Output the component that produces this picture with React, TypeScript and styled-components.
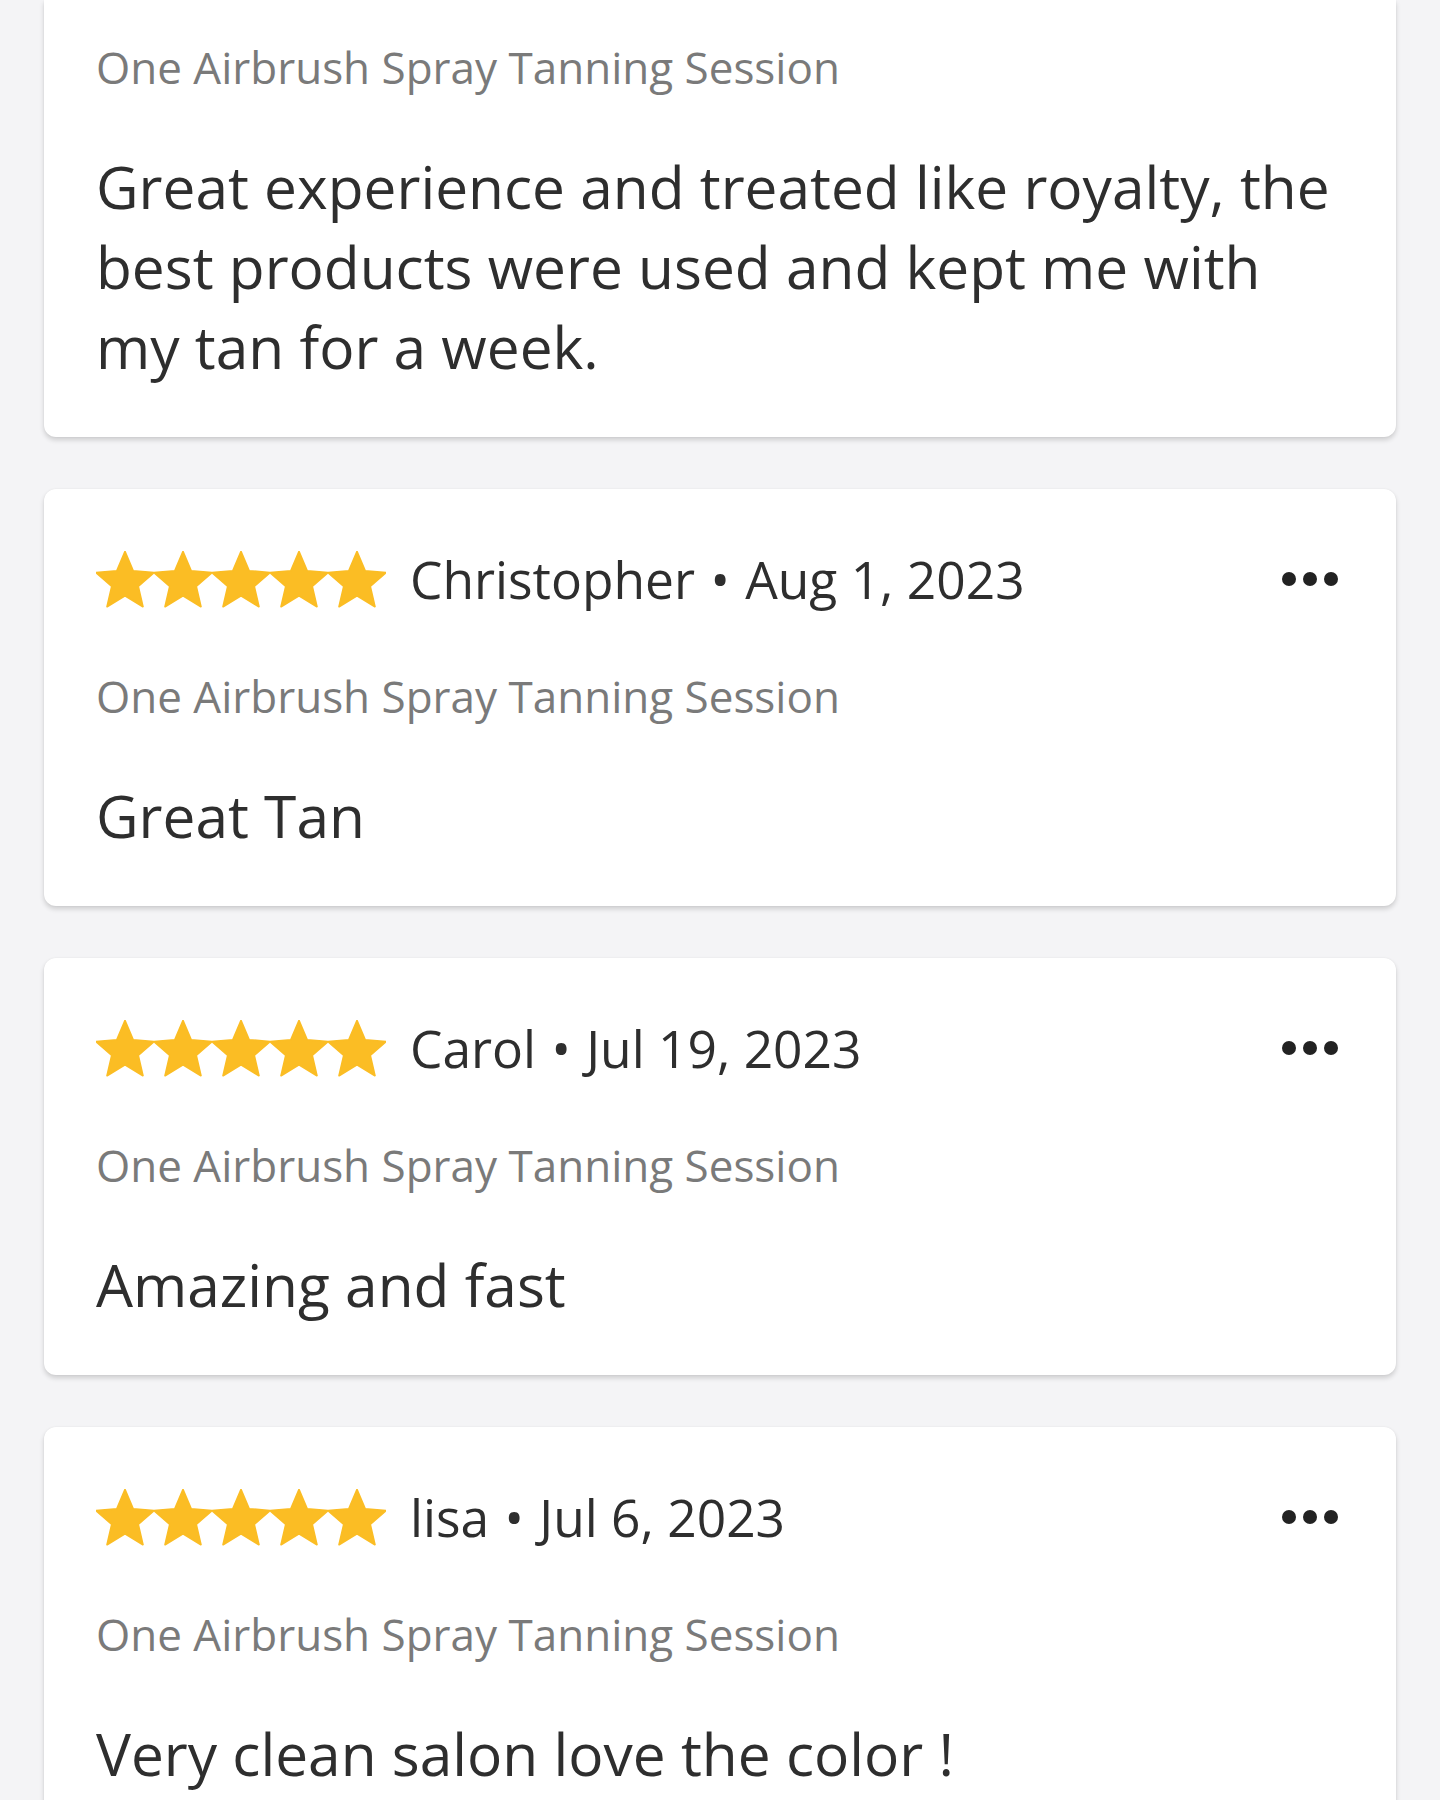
import { createGlobalStyle, styled } from "styled-components";

const GlobalStyle = createGlobalStyle`
  html, body {
    margin: 0;
    padding: 0;
    background: #f4f4f6;
    font-family: "Open Sans", "Noto Sans", sans-serif;
  }
`;

type Review = {
  id: string;
  name?: string;
  date?: string;
  service: string;
  text: string;
};

const reviews: Review[] = [
  {
    id: "r0",
    service: "One Airbrush Spray Tanning Session",
    text: "Great experience and treated like royalty, the best products were used and kept me with my tan for a week.",
  },
  {
    id: "r1",
    name: "Christopher",
    date: "Aug 1, 2023",
    service: "One Airbrush Spray Tanning Session",
    text: "Great Tan",
  },
  {
    id: "r2",
    name: "Carol",
    date: "Jul 19, 2023",
    service: "One Airbrush Spray Tanning Session",
    text: "Amazing and fast",
  },
  {
    id: "r3",
    name: "lisa",
    date: "Jul 6, 2023",
    service: "One Airbrush Spray Tanning Session",
    text: "Very clean salon love the color !",
  },
];

const Star = () => (
  <StarSvg viewBox="2 2 20 19.27">
    <path
      d="M12 17.27L18.18 21l-1.64-7.03L22 9.24l-7.19-.61L12 2 9.19 8.63 2 9.24l5.46 4.73L5.82 21z"
      fill="#fbbd24"
      stroke="#fbbd24"
      strokeWidth="0.6"
      strokeLinejoin="round"
    />
  </StarSvg>
);

const ReviewCard = ({ review, continued = false }: { review: Review; continued?: boolean }) => (
  <Card $continued={continued}>
    {!continued && (
      <Header>
        <Stars>
          {[0, 1, 2, 3, 4].map((i) => (
            <Star key={i} />
          ))}
        </Stars>
        <Author>
          {review.name} <Bullet>•</Bullet> {review.date}
        </Author>
        <MoreButton aria-label="More options">
          <Dot />
          <Dot />
          <Dot />
        </MoreButton>
      </Header>
    )}
    <Service>{review.service}</Service>
    <Body>{review.text}</Body>
  </Card>
);

export default function App() {
  return (
    <>
      <GlobalStyle />
      <List>
        {reviews.map((r, i) => (
          <ReviewCard key={r.id} review={r} continued={i === 0} />
        ))}
      </List>
    </>
  );
}

const List = styled.div`
  display: flex;
  flex-direction: column;
  gap: 52px;
  padding: 0 44px 60px;
`;

const Card = styled.div<{ $continued: boolean }>`
  background: #fff;
  border-radius: ${(p) => (p.$continued ? "0 0 12px 12px" : "12px")};
  box-shadow: 0 3px 5px rgba(0, 0, 0, 0.16), 0 0 2px rgba(0, 0, 0, 0.05);
  padding: ${(p) => (p.$continued ? "37px" : "52px")} 52px 51px;
  display: flex;
  flex-direction: column;
`;

const Header = styled.div`
  display: flex;
  align-items: center;
  height: 76px;
  margin-bottom: 49px;
`;

const Stars = styled.div`
  display: flex;
  align-items: center;
  margin-right: 24px;
`;

const StarSvg = styled.svg`
  width: 58px;
  height: 57px;
  display: block;
`;

const Author = styled.span`
  flex: 1;
  font-size: 51.5px;
  line-height: 76px;
  color: #2e2e2e;
  white-space: nowrap;
`;

const Bullet = styled.span`
  margin: 0 2px;
`;

const MoreButton = styled.button`
  display: flex;
  align-items: center;
  gap: 7px;
  border: none;
  background: none;
  padding: 0;
  margin-right: 6px;
  cursor: pointer;
`;

const Dot = styled.span`
  width: 14px;
  height: 14px;
  border-radius: 50%;
  background: #222;
`;

const Service = styled.div`
  font-size: 44px;
  line-height: 60px;
  color: #7a7a7a;
  margin-bottom: 49px;
`;

const Body = styled.div`
  font-size: 58.6px;
  line-height: 80px;
  color: #2e2e2e;
`;
